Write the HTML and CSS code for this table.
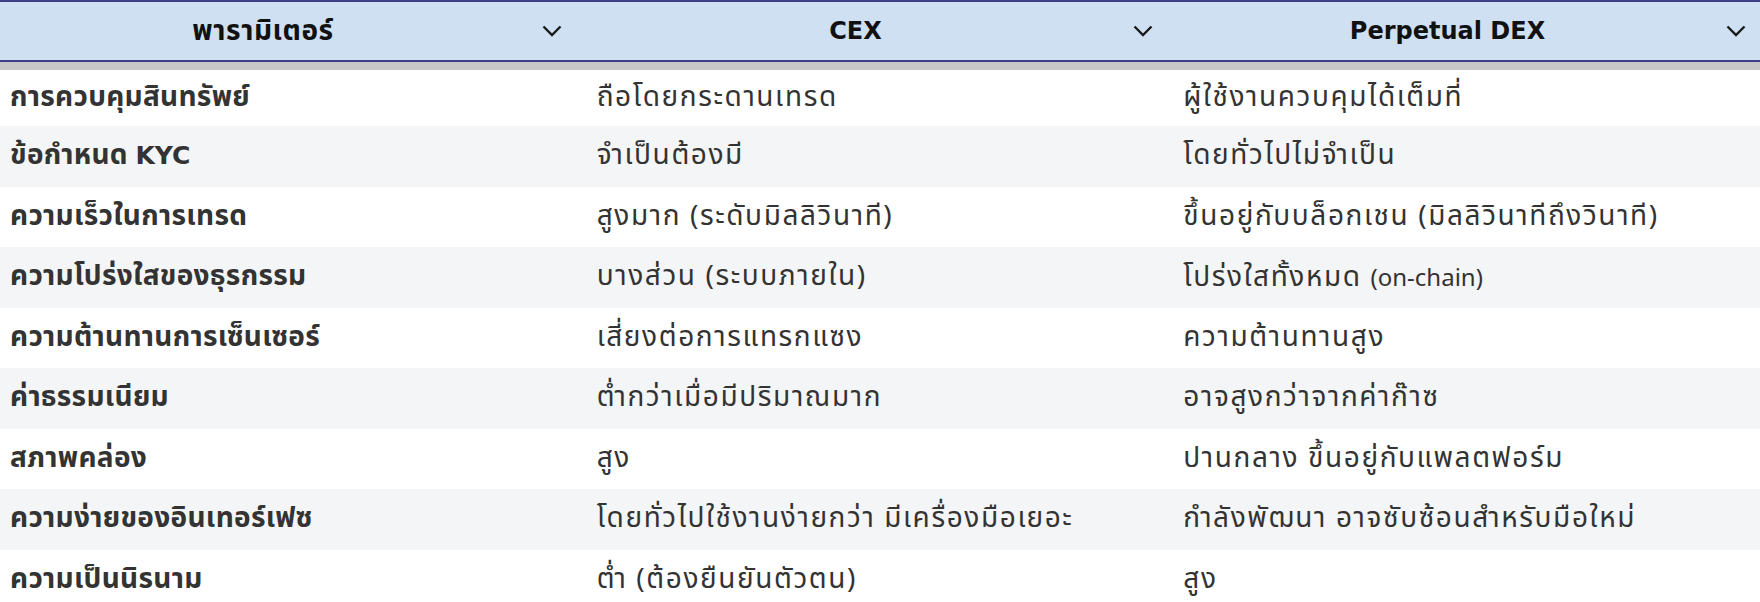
FILE: index.html
```html
<!DOCTYPE html>
<html lang="th">
<head>
<meta charset="utf-8">
<link rel="stylesheet" href="styles.css">
</head>
<body>
<div class="table">
  <div class="head">
    <div class="th"><span class="th-label">พารามิเตอร์</span><svg class="chev" viewBox="0 0 20 12"><path d="M1.5 1.5 L10 10 L18.5 1.5"/></svg></div>
    <div class="th th-shift"><span class="th-label lat-h">CEX</span><svg class="chev" viewBox="0 0 20 12"><path d="M1.5 1.5 L10 10 L18.5 1.5"/></svg></div>
    <div class="th th-shift"><span class="th-label lat-h">Perpetual DEX</span><svg class="chev" viewBox="0 0 20 12"><path d="M1.5 1.5 L10 10 L18.5 1.5"/></svg></div>
  </div>
  <div class="shadow"></div>
  <div class="body">
    <div class="row first"><div class="td key">การควบคุมสินทรัพย์</div><div class="td">ถือโดยกระดานเทรด</div><div class="td">ผู้ใช้งานควบคุมได้เต็มที่</div></div>
    <div class="row alt"><div class="td key">ข้อกำหนด <span class="lat-b">KYC</span></div><div class="td">จำเป็นต้องมี</div><div class="td">โดยทั่วไปไม่จำเป็น</div></div>
    <div class="row"><div class="td key">ความเร็วในการเทรด</div><div class="td">สูงมาก (ระดับมิลลิวินาที)</div><div class="td">ขึ้นอยู่กับบล็อกเชน (มิลลิวินาทีถึงวินาที)</div></div>
    <div class="row alt"><div class="td key">ความโปร่งใสของธุรกรรม</div><div class="td">บางส่วน (ระบบภายใน)</div><div class="td">โปร่งใสทั้งหมด <span class="lat">(on-chain)</span></div></div>
    <div class="row"><div class="td key">ความต้านทานการเซ็นเซอร์</div><div class="td">เสี่ยงต่อการแทรกแซง</div><div class="td">ความต้านทานสูง</div></div>
    <div class="row alt"><div class="td key">ค่าธรรมเนียม</div><div class="td">ต่ำกว่าเมื่อมีปริมาณมาก</div><div class="td">อาจสูงกว่าจากค่าก๊าซ</div></div>
    <div class="row"><div class="td key">สภาพคล่อง</div><div class="td">สูง</div><div class="td">ปานกลาง ขึ้นอยู่กับแพลตฟอร์ม</div></div>
    <div class="row alt"><div class="td key">ความง่ายของอินเทอร์เฟซ</div><div class="td">โดยทั่วไปใช้งานง่ายกว่า มีเครื่องมือเยอะ</div><div class="td">กำลังพัฒนา อาจซับซ้อนสำหรับมือใหม่</div></div>
    <div class="row"><div class="td key">ความเป็นนิรนาม</div><div class="td">ต่ำ (ต้องยืนยันตัวตน)</div><div class="td">สูง</div></div>
  </div>
</div>
</body>
</html>
```

FILE: styles.css
```css
html, body {
  margin: 0;
  padding: 0;
  background: #ffffff;
}
body {
  font-family: "Noto Sans Thai", "Noto Sans", sans-serif;
  font-size: 28px;
  color: #333333;
  width: 1760px;
  height: 602px;
  overflow: hidden;
}
.table {
  display: flex;
  flex-direction: column;
}
.head {
  display: grid;
  grid-template-columns: 576px 591px 1fr;
  height: 58px;
  background: #cfe0f3;
  border-top: 2px solid #3d3f88;
  border-bottom: 2px solid #3d3f88;
}
.th {
  display: flex;
  align-items: center;
  padding-right: 14px;
}
.th-label {
  flex: 1;
  text-align: center;
  font-weight: 700;
  color: #111111;
  font-size: 28px;
  letter-spacing: 0.6px;
}
.th-shift .th-label {
  padding-left: 18px;
}
.lat-h {
  font-family: "DejaVu Sans", sans-serif;
  font-size: 24px;
  letter-spacing: 0;
}
.chev {
  width: 20px;
  height: 12px;
  margin-left: 16px;
  fill: none;
  stroke: #1a1a1a;
  stroke-width: 2.4;
}
.shadow {
  height: 8px;
  background: #c8c8c8;
}
.row {
  display: grid;
  grid-template-columns: 1fr 1fr 1fr;
  height: 60.5px;
  align-items: center;
}
.row.first {
  height: 56px;
}
.row.alt {
  background: #f4f5f6;
}
.td {
  padding-left: 10px;
  white-space: nowrap;
  line-height: 40px;
  letter-spacing: 1.6px;
}
.td.key {
  font-weight: 700;
  color: #333333;
  letter-spacing: 0.3px;
}
.lat {
  font-family: "Noto Sans", sans-serif;
  font-size: 24px;
  letter-spacing: 0;
}
.lat-b {
  font-family: "DejaVu Sans", sans-serif;
  font-weight: 700;
  font-size: 25px;
  letter-spacing: 0;
}
```
